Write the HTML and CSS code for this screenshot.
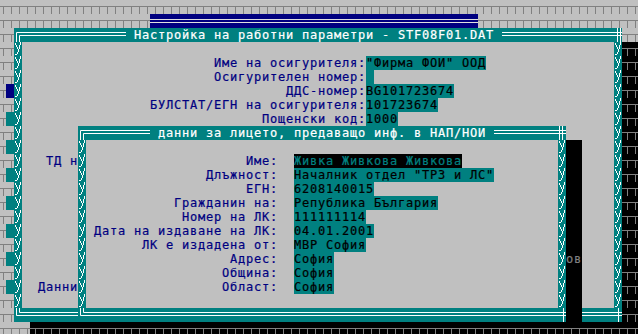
FILE: index.html
```html
<!DOCTYPE html>
<html lang="bg">
<head>
<meta charset="utf-8">
<title>Настройка на работни параметри</title>
<link rel="stylesheet" href="styles.css">
</head>
<body>
<svg class="defs" width="0" height="0" aria-hidden="true">
  <defs>
    <pattern id="side" width="8" height="14" patternUnits="userSpaceOnUse">
      <g fill="#fff">
        <rect x="1" y="1" width="1" height="2"/>
        <rect x="2" y="3" width="1" height="2"/>
        <rect x="3" y="5" width="1" height="2"/>
        <rect x="4" y="7" width="1" height="1"/>
        <rect x="6" y="0" width="1" height="3"/>
        <rect x="5" y="3" width="1" height="4"/>
        <rect x="4" y="7" width="1" height="3"/>
        <rect x="3" y="10" width="1" height="2"/>
        <rect x="2" y="12" width="1" height="1"/>
        <rect x="1" y="12" width="1" height="1"/>
      </g>
    </pattern>
  </defs>
</svg>
<div class="desk pattern">
  <div class="back-bar"></div>
  <div class="back-strip">
    <div class="cell navy"></div><div class="cell"></div>
    <div class="cell teal"></div><div class="cell"></div>
    <div class="cell teal"></div><div class="cell"></div>
    <div class="cell teal"></div><div class="cell"></div>
    <div class="cell teal"></div><div class="cell"></div>
    <div class="cell teal"></div><div class="cell"></div>
    <div class="cell teal"></div><div class="cell"></div>
    <div class="cell teal"></div>
  </div>

  <div class="win win-outer">
    <div class="w-top">
      <svg class="corner" width="8" height="14"><path d="M2.5 14 V4.5 H8 M5.5 14 V7.5 H8" stroke="#fff" fill="none"/></svg>
      <span class="dline fill-l-outer"></span>
      <span class="w-title">Настройка на работни параметри - STF08F01.DAT</span>
      <span class="dline grow"></span>
      <svg class="corner" width="8" height="14"><path d="M0 4.5 H8 M0 7.5 H8 M3.5 0 V14 M6.5 0 V14" stroke="#fff" fill="none"/></svg>
    </div>
    <svg class="w-side" width="8" height="266"><rect width="8" height="266" fill="url(#side)"/></svg>
    <div class="w-body outer-body">
      <div class="row"></div>
      <div class="row"><span class="lbl lbl-o">Име на осигурителя:</span><span class="fld">"Фирма ФОИ" ООД</span></div>
      <div class="row"><span class="lbl lbl-o">Осигурителен номер:</span><span class="fld"> </span></div>
      <div class="row"><span class="lbl lbl-o">ДДС-номер:</span><span class="fld">BG101723674</span></div>
      <div class="row"><span class="lbl lbl-o">БУЛСТАТ/ЕГН на осигурителя:</span><span class="fld">101723674</span></div>
      <div class="row"><span class="lbl lbl-o">Пощенски код:</span><span class="fld">1000</span></div>
      <div class="row"></div>
      <div class="row"></div>
      <div class="row"><span class="txt ind3">ТД н</span></div>
      <div class="row"></div>
      <div class="row"></div>
      <div class="row"></div>
      <div class="row"></div>
      <div class="row"></div>
      <div class="row"></div>
      <div class="row"></div>
      <div class="row"></div>
      <div class="row"><span class="txt ind2">Данни</span></div>
      <div class="row"></div>
    </div>
    <svg class="w-side" width="8" height="266"><rect width="8" height="266" fill="url(#side)"/></svg>
    <div class="w-bottom">
      <svg class="corner" width="8" height="14"><path d="M2.5 0 V7.5 H8 M5.5 0 V4.5 H8" stroke="#fff" fill="none"/></svg>
      <span class="dline grow"></span>
      <svg class="corner" width="8" height="14"><path d="M0 4.5 H8 M0 7.5 H8 M4.5 0 V14" stroke="#fff" fill="none"/></svg>
    </div>
  </div>

  <div class="shadow shadow-right pattern dark"></div>
  <div class="shadow shadow-bottom pattern dark"></div>
  <div class="shadow shadow-inner"><span class="ghost">ов</span></div>

  <div class="win win-inner">
    <div class="w-top">
      <svg class="corner" width="8" height="14"><path d="M2.5 14 V4.5 H8 M5.5 14 V7.5 H8" stroke="#fff" fill="none"/></svg>
      <span class="dline fill-l-inner"></span>
      <span class="w-title">данни за лицето, предаващо инф. в НАП/НОИ</span>
      <span class="dline grow"></span>
      <svg class="corner" width="8" height="14"><path d="M0 4.5 H8 M0 7.5 H8 M1.5 0 V14 M4.5 0 V14" stroke="#fff" fill="none"/></svg>
    </div>
    <svg class="w-side" width="8" height="168"><rect width="8" height="168" fill="url(#side)"/></svg>
    <div class="w-body">
      <div class="row"></div>
      <div class="row"><span class="lbl lbl-i">Име:</span><span class="fld sel">Живка Живкова Живкова</span></div>
      <div class="row"><span class="lbl lbl-i">Длъжност:</span><span class="fld">Началник отдел "ТРЗ и ЛС"</span></div>
      <div class="row"><span class="lbl lbl-i">ЕГН:</span><span class="fld">6208140015</span></div>
      <div class="row"><span class="lbl lbl-i">Гражданин на:</span><span class="fld">Република България</span></div>
      <div class="row"><span class="lbl lbl-i">Номер на ЛК:</span><span class="fld">111111114</span></div>
      <div class="row"><span class="lbl lbl-i">Дата на издаване на ЛК:</span><span class="fld">04.01.2001</span></div>
      <div class="row"><span class="lbl lbl-i">ЛК е издадена от:</span><span class="fld">МВР София</span></div>
      <div class="row"><span class="lbl lbl-i">Адрес:</span><span class="fld">София</span></div>
      <div class="row"><span class="lbl lbl-i">Община:</span><span class="fld">София</span></div>
      <div class="row"><span class="lbl lbl-i">Област:</span><span class="fld">София</span></div>
      <div class="row"></div>
    </div>
    <svg class="w-side" width="8" height="168"><rect width="8" height="168" fill="url(#side)"/></svg>
    <div class="w-bottom">
      <svg class="corner" width="8" height="14"><path d="M2.5 0 V7.5 H8 M5.5 0 V4.5 H8" stroke="#fff" fill="none"/></svg>
      <span class="dline grow"></span>
      <svg class="corner" width="8" height="14"><path d="M0 4.5 H8 M0 7.5 H8 M5.5 0 V14" stroke="#fff" fill="none"/></svg>
    </div>
  </div>
</div>
</body>
</html>
```

FILE: styles.css
```css
* { box-sizing: border-box; margin: 0; padding: 0; }

html, body {
  width: 638px;
  height: 334px;
  overflow: hidden;
  background: #c0c0c0;
}

body {
  font-family: "DejaVu Sans Mono", "Liberation Mono", monospace;
  font-size: 12px;
  letter-spacing: 0.775px;
  line-height: 14px;
  -webkit-text-stroke: 0.2px currentColor;
}

.defs { position: absolute; width: 0; height: 0; }

.pattern {
  --pbg: #c0c0c0;
  --pfg: #808080;
  background-color: var(--pbg);
  background-image:
    linear-gradient(to bottom, transparent 6px, var(--pfg) 6px, var(--pfg) 7px, transparent 7px),
    linear-gradient(to bottom, var(--pbg) 7px, transparent 7px),
    linear-gradient(to right, transparent 5px, var(--pfg) 5px, var(--pfg) 6px, transparent 6px);
  background-size: 8px 14px;
}

.pattern.dark { --pbg: #000; }

.desk {
  position: relative;
  width: 638px;
  height: 336px;
  background-position: -2px 0;
}

/* parts of windows lying behind */
.back-bar {
  position: absolute;
  left: 150px;
  top: 14px;
  width: 328px;
  height: 14px;
  background:
    linear-gradient(#e0e0e0, #e0e0e0) 0 5px / 100% 1px no-repeat,
    linear-gradient(#e0e0e0, #e0e0e0) 0 8px / 100% 1px no-repeat,
    #000080;
}

.back-strip {
  position: absolute;
  left: 6px;
  top: 84px;
  width: 8px;
  display: flex;
  flex-direction: column;
}
.back-strip .cell { height: 14px; }
.back-strip .navy { background: #000080; }
.back-strip .teal { background: #008080; }

/* windows */
.win {
  position: absolute;
  display: grid;
  grid-template-columns: 8px 1fr 8px;
  grid-template-rows: 14px 1fr 14px;
  background: #c0c0c0;
}
.win-outer { left: 14px; top: 28px; width: 608px; height: 294px; }
.win-inner { left: 78px; top: 126px; width: 488px; height: 196px; }

.w-top, .w-bottom {
  grid-column: 1 / 4;
  display: flex;
  height: 14px;
  background: #008080;
}
.corner { display: block; flex: none; }

.dline {
  display: block;
  height: 14px;
  background:
    linear-gradient(#fff, #fff) 0 4px / 100% 1px no-repeat,
    linear-gradient(#fff, #fff) 0 7px / 100% 1px no-repeat;
}
.grow { flex: 1; }
.fill-l-outer { width: 104px; flex: none; }
.fill-l-inner { width: 64px; flex: none; }

.w-title {
  color: #fff;
  white-space: pre;
  padding: 0 8px;
  height: 14px;
}

.w-side {
  display: block;
  background: #008080;
  shape-rendering: crispEdges;
}

.w-body { display: flex; flex-direction: column; }
.row {
  display: flex;
  height: 14px;
  white-space: pre;
}

.lbl { color: #000080; text-align: right; flex: none; }
.lbl-o { width: 344px; }
.lbl-i { width: 192px; margin-right: 16px; }

.fld { background: #008080; color: #000; }
.fld.sel { background: #000; color: #008080; }

.txt { color: #000080; }
.ind3 { padding-left: 24px; }
.ind2 { padding-left: 16px; }

/* shadows */
.shadow { position: absolute; }
.shadow-right { left: 622px; top: 42px; width: 16px; height: 280px; }
.shadow-bottom { left: 30px; top: 322px; width: 608px; height: 14px; }
.shadow-inner {
  left: 566px;
  top: 140px;
  width: 16px;
  height: 182px;
  background: #000;
  padding-top: 112px;
}
.ghost { color: #808080; white-space: pre; display: block; height: 14px; }
```
